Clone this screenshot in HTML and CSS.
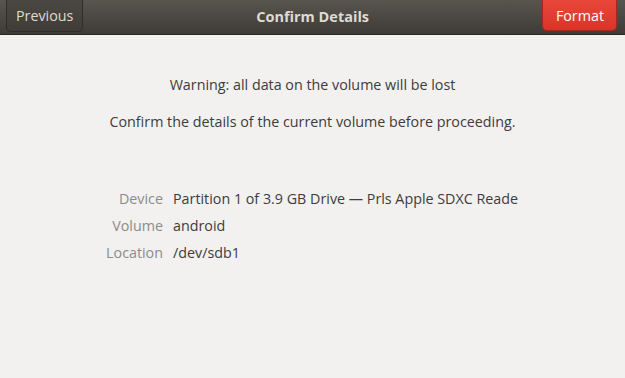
FILE: index.html
```html
<!DOCTYPE html>
<html lang="en">
  <head>
    <meta charset="UTF-8" />
    <title>Confirm Details</title>
    <link rel="stylesheet" href="styles.css">
  </head>
  <body class="body">
    <div class="header">
      <button class="button">Previous</button>
      <h1 class="title">Confirm Details</h1>
      <button class="button button_red">Format</button>
    </div>
    <div class="content">
      <p class="warning">Warning: all data on the volume will be lost</p>
      <p class="confirm">Confirm the details of the current volume before proceeding.</p>
      <div class="details">
        <span class="details__label">Device</span>
        <span class="details__value">Partition 1 of 3.9 GB Drive — Prls Apple SDXC Reade</span>
        <span class="details__label">Volume</span>
        <span class="details__value">android</span>
        <span class="details__label">Location</span>
        <span class="details__value">/dev/sdb1</span>
      </div>
    </div>
  </body>
</html>
```

FILE: styles.css
```css
.body {
  margin: 0;
  width: 625px;
  height: 378px;
  overflow: hidden;
  background-color: #f2f1f0;
  font-family: "Open Sans", "DejaVu Sans", sans-serif;
  color: #3c3c3c;
}
.header {
  display: flex;
  align-items: flex-start;
  justify-content: space-between;
  height: 35px;
  padding: 0 8px 0 6px;
  background: linear-gradient(#58544e, #3f3c37);
  border-bottom: 1px solid #2c2a27;
  box-sizing: border-box;
}
.title {
  margin: 0;
  padding-top: 7px;
  font-size: 14.5px;
  font-weight: bold;
  color: #dfdbd2;
}
.button {
  height: 32px;
  padding: 0 9px;
  border: 1px solid #2f2d2a;
  border-top: none;
  border-radius: 0 0 5px 5px;
  background: linear-gradient(#4b4843, #403d38);
  font-family: "Open Sans", "DejaVu Sans", sans-serif;
  font-size: 14.3px;
  color: #dfdbd2;
}
.button_red {
  height: 31px;
  padding: 0 12px 0 13px;
  border-color: #a9261b;
  background: linear-gradient(#e9473a, #d93427);
  color: #ffffff;
}
.content {
  display: flex;
  flex-direction: column;
  align-items: center;
  font-size: 14.3px;
}
.warning {
  margin: 40px 0 0;
}
.confirm {
  margin: 18px 0 0;
}
.details {
  align-self: flex-start;
  display: grid;
  grid-template-columns: 163px auto;
  column-gap: 10px;
  row-gap: 8px;
  margin-top: 58px;
}
.details__label {
  text-align: right;
  color: #8b8b8b;
}
.details__value {
  white-space: nowrap;
}
```
